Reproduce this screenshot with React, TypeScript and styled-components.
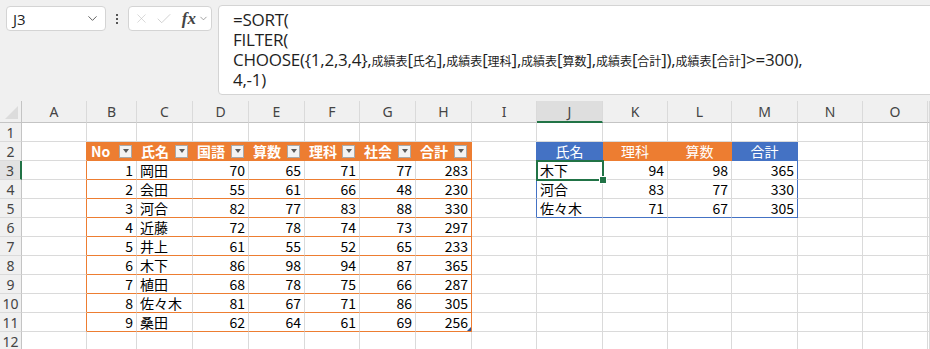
import React from "react";
import styled, { createGlobalStyle } from "styled-components";
import { ChevronDown, X, Check } from "lucide-react";

const ORANGE = "#ed7d31";
const BLUE = "#4472c4";
const GREEN = "#217346";
const GRID = "#dadada";
const HEAD_LINE = "#c4c4c4";

const GlobalStyle = createGlobalStyle`
  html, body { margin: 0; padding: 0; background: #fff; }
  body { font-family: "Noto Sans CJK JP", "Noto Sans", sans-serif; }
  * { box-sizing: border-box; }
`;

const LETTERS = ["A", "B", "C", "D", "E", "F", "G", "H", "I", "J", "K", "L", "M", "N", "O"];
const WIDTHS = [65, 50, 56, 56, 56, 55, 56, 56, 65, 66, 65, 64, 66, 65, 65];

// 成績表 (B2:H11)
const scoreHead = ["No", "氏名", "国語", "算数", "理科", "社会", "合計"];
const scores: Array<[number, string, number, number, number, number, number]> = [
  [1, "岡田", 70, 65, 71, 77, 283],
  [2, "会田", 55, 61, 66, 48, 230],
  [3, "河合", 82, 77, 83, 88, 330],
  [4, "近藤", 72, 78, 74, 73, 297],
  [5, "井上", 61, 55, 52, 65, 233],
  [6, "木下", 86, 98, 94, 87, 365],
  [7, "植田", 68, 78, 75, 66, 287],
  [8, "佐々木", 81, 67, 71, 86, 305],
  [9, "桑田", 62, 64, 61, 69, 256],
];

// 抽出結果 (J2:M5)
const resultHead: Array<[string, string]> = [
  ["氏名", BLUE],
  ["理科", ORANGE],
  ["算数", ORANGE],
  ["合計", BLUE],
];
const results: Array<[string, number, number, number]> = [
  ["木下", 94, 98, 365],
  ["河合", 83, 77, 330],
  ["佐々木", 71, 67, 305],
];

const formulaLines = [
  "=SORT(",
  "FILTER(",
  "CHOOSE({1,2,3,4},成績表[氏名],成績表[理科],成績表[算数],成績表[合計]),成績表[合計]>=300),",
  "4,-1)",
];

type Align = "left" | "right" | "center";
type Spec = {
  text?: string;
  align: Align;
  fill?: string;
  ink?: string;
  bold?: boolean;
  filter?: boolean;
  padX: number;
  r: string;
  b: string;
  selected?: boolean;
  resize?: boolean;
};

const cellSpec = (row: number, col: number): Spec => {
  const inT1 = row >= 2 && row <= 11 && col >= 1 && col <= 7;
  const inT2 = row >= 2 && row <= 5 && col >= 9 && col <= 12;
  const spec: Spec = { align: "left", padX: 3, r: GRID, b: GRID };

  if ((col === 0 || col === 7) && row >= 2 && row <= 11) spec.r = ORANGE;
  if ((col === 8 || col === 12) && row >= 2 && row <= 5) spec.r = BLUE;

  if (inT1) {
    spec.b = ORANGE;
    if (row === 2) {
      spec.text = scoreHead[col - 1];
      spec.fill = ORANGE;
      spec.ink = "#fff";
      spec.bold = true;
      spec.filter = true;
      spec.padX = 4;
      if (col < 7) spec.r = ORANGE;
    } else {
      const v = scores[row - 3][col - 1];
      spec.text = String(v);
      spec.align = col === 2 ? "left" : "right";
      if (row === 11 && col === 7) spec.resize = true;
    }
  }

  if (inT2) {
    if (row === 2) {
      const [label, color] = resultHead[col - 9];
      spec.text = label;
      spec.fill = color;
      spec.ink = "#fff";
      spec.align = "center";
      spec.b = color;
      if (col < 12) spec.r = color;
    } else {
      const v = results[row - 3][col - 9];
      spec.text = String(v);
      spec.align = col === 9 ? "left" : "right";
      if (row === 5) spec.b = BLUE;
      if (row === 3 && col === 9) spec.selected = true;
    }
  }
  return spec;
};

const CJK = /[\u3000-\u9fff\uff00-\uffef]/;
const splitRuns = (line: string) =>
  line.split(/([\u3000-\u9fff\uff00-\uffef]+)/).filter((s) => s.length > 0);

export default function App() {
  const rows = Array.from({ length: 12 }, (_, i) => i + 1);
  return (
    <Screen>
      <GlobalStyle />
      <TopBar>
        <NameBox>
          <span>J3</span>
          <ChevronDown size={15} strokeWidth={1.5} color="#555" />
        </NameBox>
        <Grip>
          <i />
          <i />
          <i />
        </Grip>
        <FxBox>
          <X size={15} strokeWidth={1} color="#c2c2c2" />
          <Check size={18} strokeWidth={1} color="#c2c2c2" />
          <FxMark>fx</FxMark>
          <ChevronDown size={11} strokeWidth={1.5} color="#777" />
        </FxBox>
        <FormulaBox>
          {formulaLines.map((line, i) => (
            <FormulaLine key={i}>
              {splitRuns(line).map((run, j) =>
                CJK.test(run) ? <Jp key={j}>{run}</Jp> : <Latin key={j}>{run}</Latin>
              )}
            </FormulaLine>
          ))}
        </FormulaBox>
      </TopBar>

      <Sheet $cols={WIDTHS}>
        <Corner />
        {LETTERS.map((l, c) => (
          <ColHead key={l} $active={c === 9}>
            {l}
          </ColHead>
        ))}
        <ColHead $active={false} />

        {rows.map((row) => (
          <React.Fragment key={row}>
            <RowHead $active={row === 3}>{row}</RowHead>
            {LETTERS.map((l, col) => {
              const s = cellSpec(row, col);
              return (
                <Cell
                  key={l}
                  $fill={s.fill}
                  $ink={s.ink}
                  $bold={s.bold}
                  $align={s.align}
                  $padX={s.padX}
                  $r={s.r}
                  $b={s.b}
                >
                  {s.text}
                  {s.filter && <FilterButton />}
                  {s.selected && (
                    <Selection>
                      <FillHandle />
                    </Selection>
                  )}
                  {s.resize && <ResizeMark />}
                </Cell>
              );
            })}
            <Cell $align="left" $padX={0} $r={GRID} $b={GRID} />
          </React.Fragment>
        ))}
      </Sheet>
    </Screen>
  );
}

const Screen = styled.div`
  width: 930px;
  height: 349px;
  overflow: hidden;
  background: #fff;
`;

const TopBar = styled.div`
  height: 101px;
  background: #f0f0f0;
  display: flex;
  align-items: flex-start;
  padding: 5px 0 0 6px;
  overflow: hidden;
`;

const NameBox = styled.div`
  margin-top: 1px;
  width: 100px;
  height: 25px;
  flex: none;
  background: #fff;
  border: 1px solid #d4d4d4;
  border-radius: 4px;
  display: flex;
  align-items: center;
  justify-content: space-between;
  padding: 0 5px 0 6px;
  font-family: "Open Sans", sans-serif;
  font-size: 15px;
  color: #222;
`;

const Grip = styled.div`
  width: 22px;
  height: 25px;
  margin-top: 1px;
  flex: none;
  display: flex;
  flex-direction: column;
  align-items: center;
  justify-content: center;
  gap: 2px;
  i {
    display: block;
    width: 2px;
    height: 2px;
    background: #555;
  }
`;

const FxBox = styled.div`
  margin-top: 1px;
  width: 84px;
  height: 25px;
  flex: none;
  background: #fff;
  border: 1px solid #d4d4d4;
  border-radius: 4px;
  display: flex;
  align-items: center;
  gap: 6px;
  padding: 0 2px 0 5px;
`;

const FxMark = styled.span`
  font-family: "Liberation Serif", serif;
  font-style: italic;
  font-weight: 700;
  font-size: 17px;
  color: #444;
  margin-left: 3px;
  margin-right: -4px;
`;

const FormulaBox = styled.div`
  margin-left: 6px;
  margin-right: -8px;
  flex: 1;
  height: 90px;
  background: #fff;
  border: 1px solid #d4d4d4;
  border-radius: 4px;
  padding: 4px 0 0 14px;
  font-family: "Open Sans", sans-serif;
  font-size: 17px;
  line-height: 20px;
  color: #1e1e1e;
`;

const FormulaLine = styled.div`
  height: 20px;
  white-space: nowrap;
`;

const Latin = styled.span`
  display: inline-block;
  line-height: 18px;
  letter-spacing: -0.25px;
`;

const Jp = styled.span`
  display: inline-block;
  line-height: 16px;
  font-family: "Noto Sans CJK JP", sans-serif;
  font-size: 12px;
`;

const Sheet = styled.div<{ $cols: number[] }>`
  display: grid;
  grid-template-columns: 22px ${(p) => p.$cols.map((w) => `${w}px`).join(" ")} 1fr;
  grid-template-rows: 22px repeat(12, 19px);
`;

const Corner = styled.div`
  position: relative;
  background: #f0f0f0;
  border-right: 1px solid ${HEAD_LINE};
  border-bottom: 1px solid ${HEAD_LINE};
  &::after {
    content: "";
    position: absolute;
    right: 3px;
    bottom: 3px;
    width: 13px;
    height: 13px;
    background: #dcdcdc;
    clip-path: polygon(100% 0, 100% 100%, 0 100%);
  }
`;

const ColHead = styled.div<{ $active: boolean }>`
  background: ${(p) => (p.$active ? "#dedede" : "#f0f0f0")};
  border-right: 1px solid ${GRID};
  border-bottom: ${(p) => (p.$active ? `2px solid ${GREEN}` : `1px solid ${HEAD_LINE}`)};
  display: flex;
  align-items: center;
  justify-content: center;
  font-family: "Noto Sans", sans-serif;
  font-size: 14px;
  color: #444;
`;

const RowHead = styled.div<{ $active: boolean }>`
  background: ${(p) => (p.$active ? "#e2e2e2" : "#f0f0f0")};
  border-right: ${(p) => (p.$active ? `2px solid ${GREEN}` : `1px solid ${HEAD_LINE}`)};
  border-bottom: 1px solid ${GRID};
  display: flex;
  align-items: center;
  justify-content: center;
  font-family: "Noto Sans", sans-serif;
  font-size: 14px;
  color: #444;
`;

const Cell = styled.div<{
  $fill?: string;
  $ink?: string;
  $bold?: boolean;
  $align: Align;
  $padX: number;
  $r: string;
  $b: string;
}>`
  position: relative;
  min-width: 0;
  background: ${(p) => p.$fill ?? "#fff"};
  border-right: 1px solid ${(p) => p.$r};
  border-bottom: 1px solid ${(p) => p.$b};
  display: flex;
  align-items: center;
  justify-content: ${(p) =>
    p.$align === "right" ? "flex-end" : p.$align === "center" ? "center" : "flex-start"};
  padding: 0 ${(p) => p.$padX}px;
  font-size: 14px;
  line-height: 1;
  font-weight: ${(p) => (p.$bold ? 700 : 400)};
  color: ${(p) => p.$ink ?? "#000"};
  white-space: nowrap;
`;

const FilterButton = styled.span`
  margin-left: auto;
  width: 13px;
  height: 13px;
  flex: none;
  background: #f3f3f3;
  border: 1px solid #a9a9a9;
  display: flex;
  align-items: center;
  justify-content: center;
  &::after {
    content: "";
    border-left: 3.5px solid transparent;
    border-right: 3.5px solid transparent;
    border-top: 4px solid #5a5a5a;
  }
`;

const Selection = styled.div`
  position: absolute;
  z-index: 2;
  left: -1px;
  top: -1px;
  width: 68px;
  height: 21px;
  border: 2px solid ${GREEN};
  pointer-events: none;
`;

const FillHandle = styled.div`
  position: absolute;
  right: -4px;
  bottom: -4px;
  width: 6px;
  height: 6px;
  background: ${GREEN};
  border: 1px solid #fff;
  box-sizing: content-box;
  margin: -1px;
`;

const ResizeMark = styled.span`
  position: absolute;
  right: 0;
  bottom: 0;
  width: 4px;
  height: 4px;
  background: #2f5597;
  clip-path: polygon(100% 0, 100% 100%, 0 100%);
`;
